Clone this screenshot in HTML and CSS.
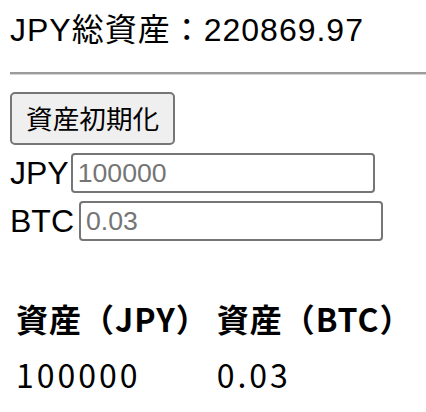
FILE: index.html
```html
<!DOCTYPE html>
<html lang="ja">
<head>
<meta charset="utf-8">
<title>資産</title>
<link rel="stylesheet" href="styles.css">
</head>
<body>
<div class="total">JPY総資産：220869.97</div>
<hr class="rule">
<div class="actions"><button class="btn" type="button">資産初期化</button></div>
<div class="row"><span class="label">JPY</span><input class="field field-jpy" type="text" placeholder="100000"></div>
<div class="row"><span class="label">BTC</span><input class="field field-btc" type="text" placeholder="0.03"></div>
<table class="assets">
<tr><th>資産（JPY）</th><th>資産（BTC）</th></tr>
<tr><td>100000</td><td>0.03</td></tr>
</table>
</body>
</html>
```
FILE: styles.css
```css
html, body {
  background: #ffffff;
}
body {
  margin: 0;
  padding: 10px 0 0 10px;
  font-family: "Liberation Sans", "Noto Sans CJK JP", sans-serif;
  font-size: 32px;
  color: #000000;
  overflow: hidden;
}
.total {
  line-height: 40px;
  height: 40px;
  white-space: nowrap;
  letter-spacing: 1px;
}
.rule {
  margin: 22px 0 17px 0;
  height: 0;
  border: 0;
  border-top: 2px solid #9c9c9c;
  border-bottom: 1px solid #d4d4d4;
}
.actions {
  height: 53px;
  margin-bottom: 4px;
}
.btn {
  box-sizing: border-box;
  height: 53px;
  margin: 0;
  padding: 0 14px;
  font-family: "Noto Sans CJK JP", "Liberation Sans", sans-serif;
  font-size: 26.67px;
  line-height: 1;
  color: #000000;
  background: #efefef;
  border: 2px solid #767676;
  border-radius: 5px;
}
.row {
  display: flex;
  align-items: center;
  height: 48px;
}
.label {
  line-height: 37px;
  white-space: nowrap;
}
.field {
  box-sizing: border-box;
  width: 304px;
  height: 40px;
  margin: 0 0 0 2px;
  padding: 0 5px;
  font-family: "Liberation Sans", sans-serif;
  font-size: 26.67px;
  color: #000000;
  background: #ffffff;
  border: 2px solid #767676;
  border-radius: 4px;
}
.field-btc {
  margin-left: 5px;
}
.field::placeholder {
  color: #757575;
}
.assets {
  margin-top: 43px;
  border-spacing: 4px;
  font-family: "Noto Sans CJK JP", "Liberation Sans", sans-serif;
  font-size: 32px;
  line-height: 48px;
  text-align: left;
}
.assets th,
.assets td {
  padding: 2px;
  white-space: nowrap;
}
.assets th {
  font-weight: 700;
  letter-spacing: 1px;
}
.assets td {
  font-weight: 400;
  letter-spacing: 3px;
}
```
